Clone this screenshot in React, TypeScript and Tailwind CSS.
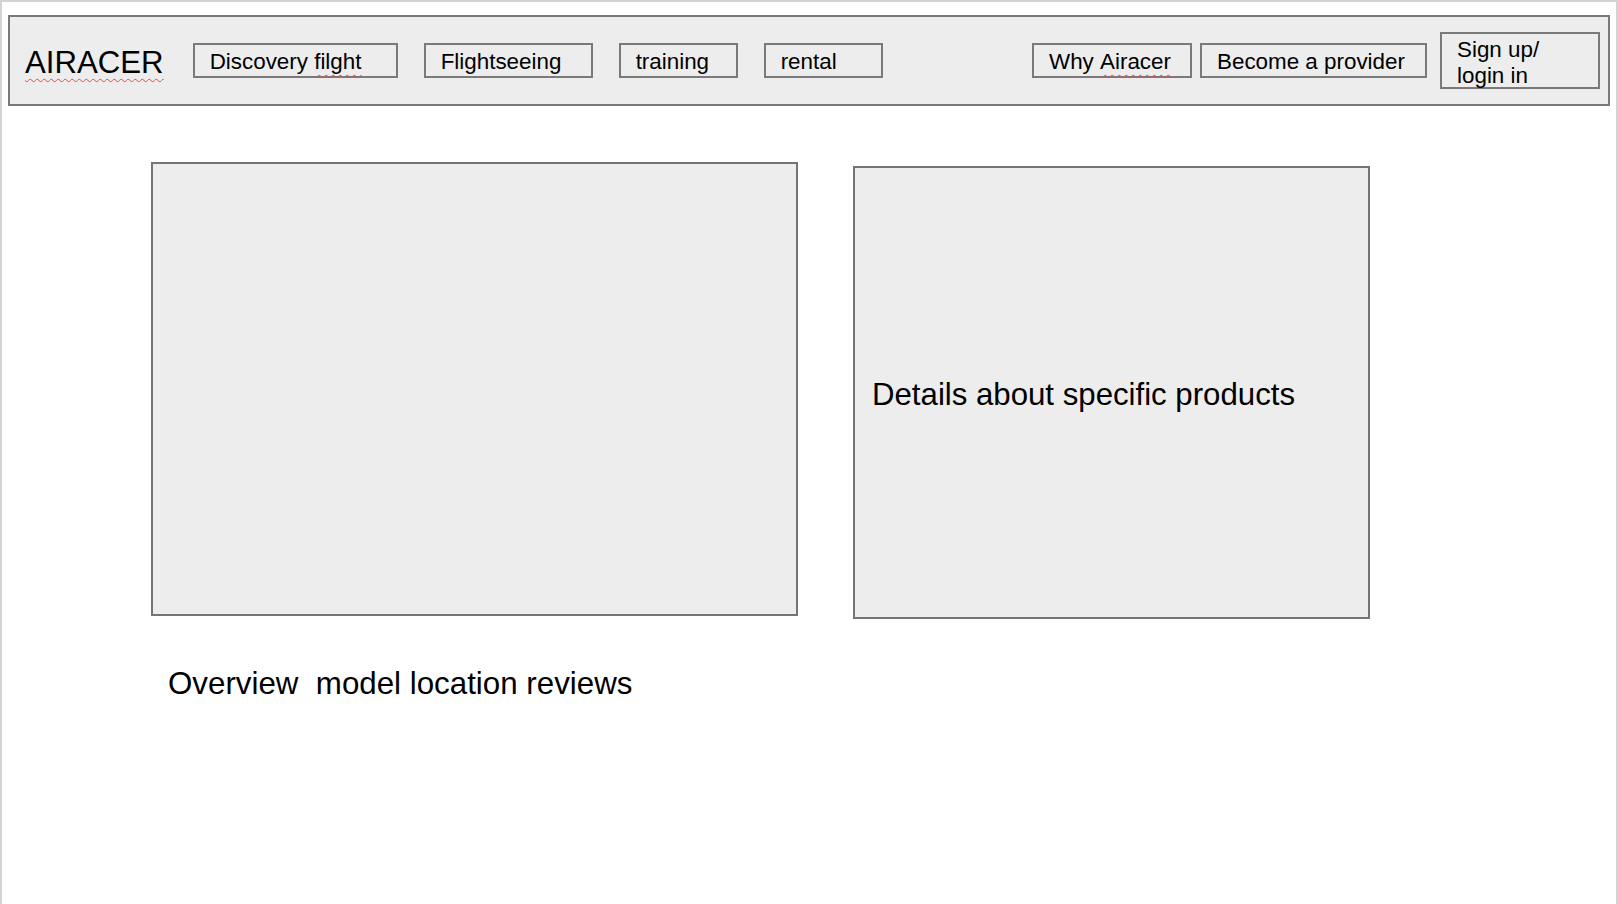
import React from "react";

const squiggle =
  "underline decoration-wavy decoration-[#dd4b4b] decoration-1 underline-offset-[5px]";

function NavButton({
  width,
  children,
}: {
  width: string;
  children: React.ReactNode;
}) {
  return (
    <div
      className={`${width} h-[35px] border-2 border-[#7a7a7a] flex items-center pl-[15px] pt-[2px] text-[22.4px] leading-[26px] whitespace-nowrap`}
    >
      {children}
    </div>
  );
}

export default function App() {
  return (
    <div
      className="w-full h-[904px] bg-white border-t-2 border-x-2 border-[#d3d3d3] px-[6px] pt-[13px] text-black overflow-hidden"
      style={{ fontFamily: '"Liberation Sans", Arial, sans-serif' }}
    >
      {/* Header */}
      <header className="h-[91px] border-2 border-[#7a7a7a] bg-[#ededed] flex items-center pl-[15px] pr-[8px]">
        <div className="pt-[4px]">
          <div className={`text-[31.2px] leading-[36px] whitespace-nowrap ${squiggle}`}>
            AIRACER
          </div>
        </div>
        <div className="flex items-center gap-[26px] ml-[29px]">
          <NavButton width="w-[205px]">
            Discovery&nbsp;<span className={squiggle}>filght</span>
          </NavButton>
          <NavButton width="w-[169px]">Flightseeing</NavButton>
          <NavButton width="w-[119px]">training</NavButton>
          <NavButton width="w-[119px]">rental</NavButton>
        </div>
        <div className="ml-auto flex items-center">
          <NavButton width="w-[160px]">
            Why&nbsp;<span className={squiggle}>Airacer</span>
          </NavButton>
          <div className="ml-[8px]">
            <NavButton width="w-[227px]">Become a provider</NavButton>
          </div>
          <div className="ml-[13px] w-[160px] h-[57px] border-2 border-[#7a7a7a] pl-[15px] pt-[3px] text-[22.4px] leading-[26px]">
            <div>Sign up/</div>
            <div>login in</div>
          </div>
        </div>
      </header>

      {/* Main */}
      <main className="pl-[143px] pt-[56px]">
        <div className="flex items-start gap-[55px]">
          <div className="w-[647px] h-[454px] border-2 border-[#757575] bg-[#ededed]" />
          <div className="mt-[4px] w-[517px] h-[453px] border-2 border-[#757575] bg-[#ededed] flex items-center pl-[17px] pt-[4px]">
            <span className="text-[31.2px] leading-[36px] whitespace-nowrap">
              Details about specific products
            </span>
          </div>
        </div>
        <div className="mt-[47px] ml-[17px] text-[31.3px] leading-[36px] whitespace-pre">
          {"Overview  model location reviews"}
        </div>
      </main>
    </div>
  );
}
